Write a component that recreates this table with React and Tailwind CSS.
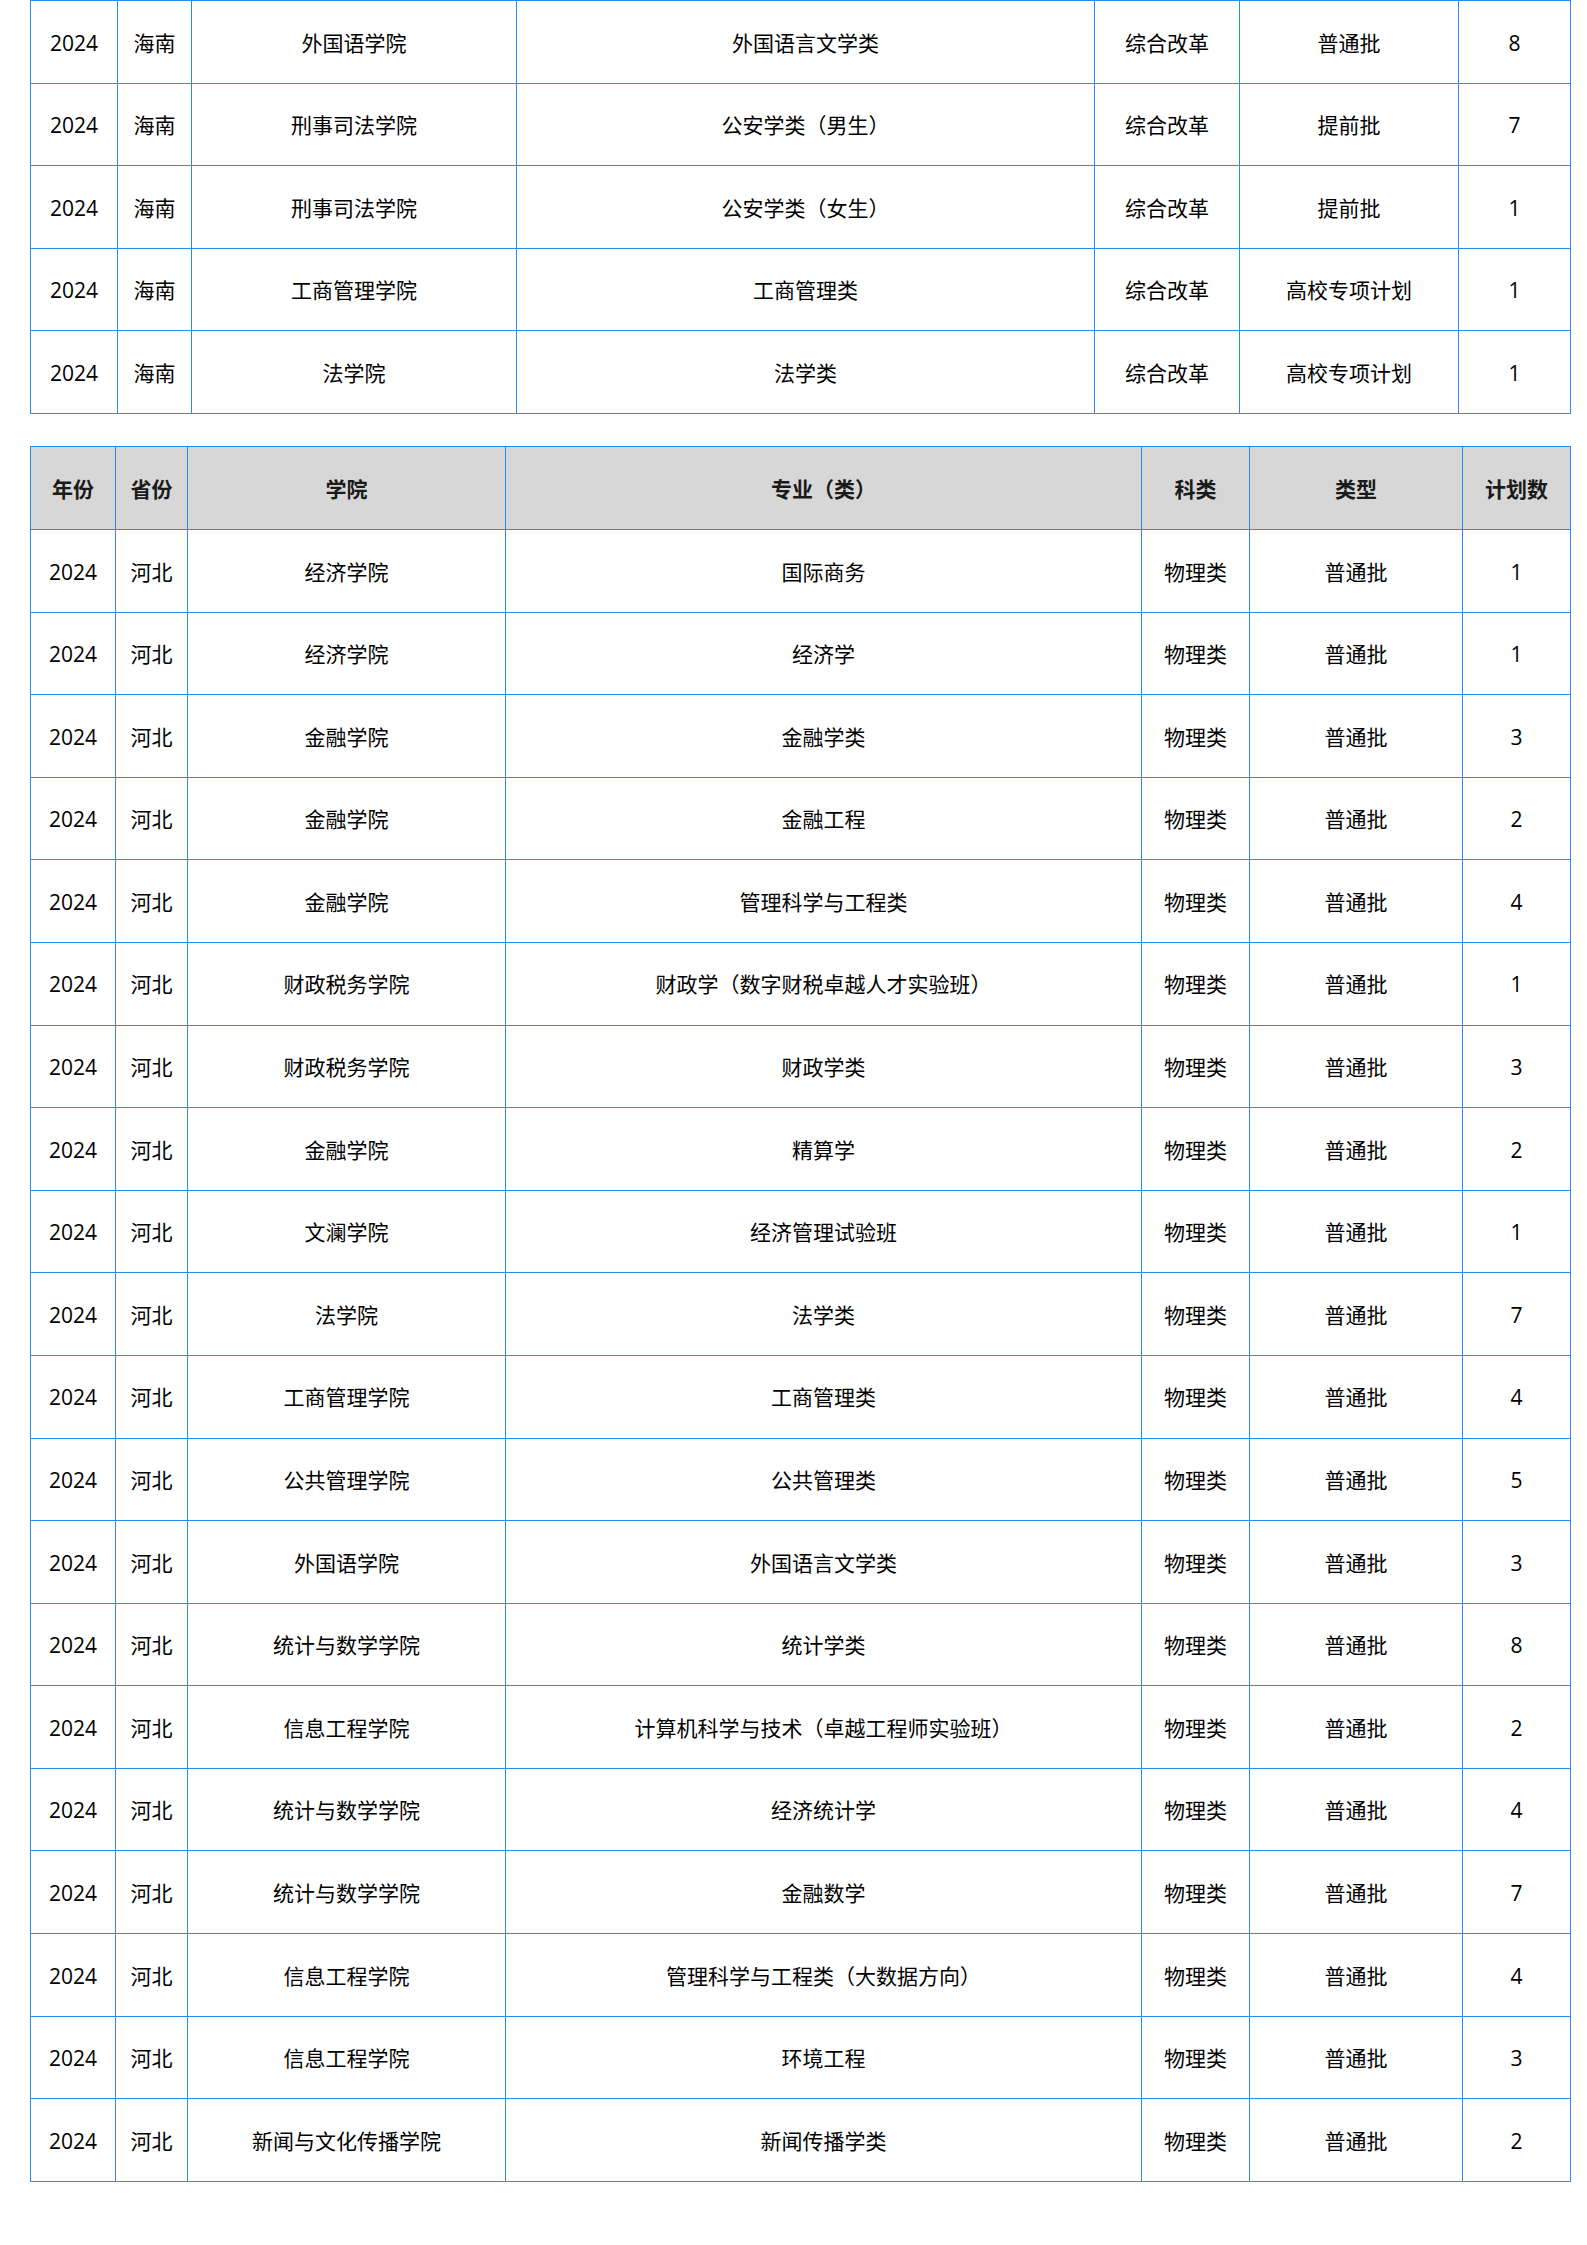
const font = { fontFamily: '"Open Sans", "Noto Sans CJK SC", sans-serif' };

const hainan = [
  ["外国语学院", "外国语言文学类", "普通批", "8"],
  ["刑事司法学院", "公安学类（男生）", "提前批", "7"],
  ["刑事司法学院", "公安学类（女生）", "提前批", "1"],
  ["工商管理学院", "工商管理类", "高校专项计划", "1"],
  ["法学院", "法学类", "高校专项计划", "1"],
];

const hebei = [
  ["经济学院", "国际商务", "1"],
  ["经济学院", "经济学", "1"],
  ["金融学院", "金融学类", "3"],
  ["金融学院", "金融工程", "2"],
  ["金融学院", "管理科学与工程类", "4"],
  ["财政税务学院", "财政学（数字财税卓越人才实验班）", "1"],
  ["财政税务学院", "财政学类", "3"],
  ["金融学院", "精算学", "2"],
  ["文澜学院", "经济管理试验班", "1"],
  ["法学院", "法学类", "7"],
  ["工商管理学院", "工商管理类", "4"],
  ["公共管理学院", "公共管理类", "5"],
  ["外国语学院", "外国语言文学类", "3"],
  ["统计与数学学院", "统计学类", "8"],
  ["信息工程学院", "计算机科学与技术（卓越工程师实验班）", "2"],
  ["统计与数学学院", "经济统计学", "4"],
  ["统计与数学学院", "金融数学", "7"],
  ["信息工程学院", "管理科学与工程类（大数据方向）", "4"],
  ["信息工程学院", "环境工程", "3"],
  ["新闻与文化传播学院", "新闻传播学类", "2"],
];

const cell = "border border-[#2a8bf0] text-center align-middle p-0 pt-[3px] text-[21px] text-black";

function Cell({ children }) {
  return <td className={cell}>{children}</td>;
}

export default function App() {
  return (
    <div className="min-h-screen bg-white px-[30px]" style={font}>
      <table className="table-fixed border-collapse w-[1540px]">
        <colgroup>
          <col className="w-[87px]" />
          <col className="w-[74px]" />
          <col className="w-[325px]" />
          <col className="w-[578px]" />
          <col className="w-[145px]" />
          <col className="w-[219px]" />
          <col className="w-[112px]" />
        </colgroup>
        <tbody>
          {hainan.map((r, i) => (
            <tr key={i} className="h-[82.6px]">
              <Cell>2024</Cell>
              <Cell>海南</Cell>
              <Cell>{r[0]}</Cell>
              <Cell>{r[1]}</Cell>
              <Cell>综合改革</Cell>
              <Cell>{r[2]}</Cell>
              <Cell>{r[3]}</Cell>
            </tr>
          ))}
        </tbody>
      </table>

      <table className="table-fixed border-collapse w-[1540px] mt-[32px]">
        <colgroup>
          <col className="w-[85px]" />
          <col className="w-[72px]" />
          <col className="w-[318px]" />
          <col className="w-[636px]" />
          <col className="w-[108px]" />
          <col className="w-[213px]" />
          <col className="w-[108px]" />
        </colgroup>
        <thead>
          <tr className="h-[83px] bg-[#d7d7d7]">
            {["年份", "省份", "学院", "专业（类）", "科类", "类型", "计划数"].map((h) => (
              <th key={h} className="border border-[#2a8bf0] text-center align-middle p-0 pt-[3px] text-[21px] font-bold text-[#1a1a1a]">
                {h}
              </th>
            ))}
          </tr>
        </thead>
        <tbody>
          {hebei.map((r, i) => (
            <tr key={i} className="h-[82.6px]">
              <Cell>2024</Cell>
              <Cell>河北</Cell>
              <Cell>{r[0]}</Cell>
              <Cell>{r[1]}</Cell>
              <Cell>物理类</Cell>
              <Cell>普通批</Cell>
              <Cell>{r[2]}</Cell>
            </tr>
          ))}
        </tbody>
      </table>
    </div>
  );
}
